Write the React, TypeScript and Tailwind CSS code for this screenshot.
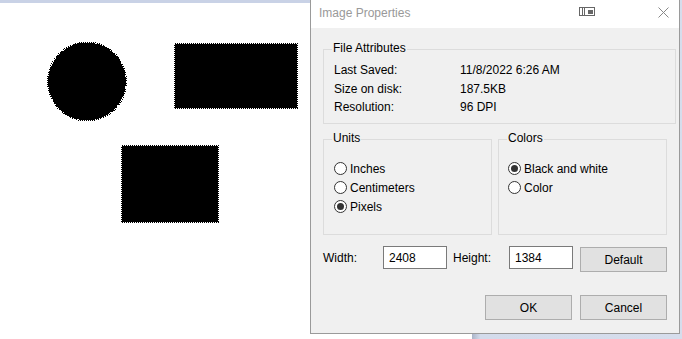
import React from 'react'

// Win10 style radio
function Radio({ label, checked = false }: { label: string; checked?: boolean }) {
  return (
    <div className="flex h-[19px] items-center gap-[3px]">
      <span className="flex h-[13px] w-[13px] items-center justify-center rounded-full border border-[#333333] bg-white">
        {checked && <span className="h-[7px] w-[7px] rounded-full bg-[#333333]" />}
      </span>
      <span>{label}</span>
    </div>
  )
}

function Group({ title, className, children }: { title: string; className: string; children: React.ReactNode }) {
  return (
    <div className={`relative border border-[#dcdcdc] ${className}`}>
      <span className="absolute -top-[9px] left-[8px] bg-[#f0f0f0] px-[1px] leading-[15px]">{title}</span>
      {children}
    </div>
  )
}

function Button({ label, className = '' }: { label: string; className?: string }) {
  return (
    <div className={`flex h-[25px] w-[87px] items-center justify-center border border-[#adadad] bg-[#e1e1e1] ${className}`}>
      {label}
    </div>
  )
}

export default function App() {
  const rows = [
    ['Last Saved:', '11/8/2022 6:26 AM'],
    ['Size on disk:', '187.5KB'],
    ['Resolution:', '96 DPI'],
  ]

  return (
    <div
      className="relative h-[339px] w-[682px] overflow-hidden bg-white text-[12px] text-black"
      style={{ fontFamily: '"Liberation Sans", Arial, sans-serif' }}
    >
      {/* paint canvas behind the dialog */}
      <div className="h-[3px] w-[310px] bg-[#c9d2e6]" />
      <div className="absolute bottom-0 left-[472px] right-0 top-0 bg-gradient-to-r from-[#aab4c8] from-0% via-[#d3dbeb] via-[4%] to-[#d6ddec]" />
      <svg className="absolute left-0 top-0" width="310" height="339" shapeRendering="crispEdges">
        <circle cx="87" cy="81.5" r="39" fill="#000" />
        <circle cx="87" cy="81.5" r="39.5" fill="none" stroke="#000" strokeWidth="1" strokeDasharray="1 1" />
        <rect x="175" y="44" width="122" height="64" fill="#000" />
        <rect x="174.5" y="43.5" width="123" height="65" fill="none" stroke="#000" strokeDasharray="1 1" />
        <rect x="122" y="146" width="96" height="76" fill="#000" />
        <rect x="121.5" y="145.5" width="97" height="77" fill="none" stroke="#000" strokeDasharray="1 1" />
      </svg>

      {/* dialog window */}
      <div className="absolute left-[310px] top-0 flex h-[334px] w-[370px] flex-col border-x border-b border-[#9a9a9a] bg-[#f0f0f0]">
        <div className="flex h-[28px] items-center bg-white pl-[8px] pr-[10px] text-[#999999]">
          <span className="-mt-[2px]">Image Properties</span>
          <svg className="ml-auto mr-[63px] -mt-[5px]" width="16" height="9" viewBox="0 0 16 9">
            <rect x="0.5" y="0.5" width="15" height="8" fill="none" stroke="#666" />
            <path d="M3.5 1v7M5.5 1v7" stroke="#666" />
            <rect x="9" y="3" width="5" height="4" fill="#666" />
          </svg>
          <svg className="-mt-[3px]" width="11" height="11" viewBox="0 0 11 11">
            <path d="M0.5 0.5l10 10M10.5 0.5l-10 10" stroke="#888" strokeWidth="1" />
          </svg>
        </div>

        <div className="flex flex-col pl-[12px]">
          <Group title="File Attributes" className="mt-[21px] h-[75px] w-[353px] pl-[10px] pt-[11px]">
            {rows.map(([k, v]) => (
              <div key={k} className="flex h-[18.5px] items-center">
                <span className="w-[126px]">{k}</span>
                <span>{v}</span>
              </div>
            ))}
          </Group>

          <div className="mt-[15px] flex gap-[6px]">
            <Group title="Units" className="h-[96px] w-[169px] pl-[10px] pt-[19px]">
              <Radio label="Inches" />
              <Radio label="Centimeters" />
              <Radio label="Pixels" checked />
            </Group>
            <Group title="Colors" className="h-[96px] w-[169px] pl-[9px] pt-[19px]">
              <Radio label="Black and white" checked />
              <Radio label="Color" />
            </Group>
          </div>

          <div className="mt-[11px] flex items-start">
            <span className="flex h-[23px] w-[60px] items-center">Width:</span>
            <div className="flex h-[23px] w-[64px] items-center border border-[#7a7a7a] bg-white pl-[5px]">2408</div>
            <span className="ml-[6px] flex h-[23px] w-[56px] items-center">Height:</span>
            <div className="flex h-[23px] w-[64px] items-center border border-[#7a7a7a] bg-white pl-[5px]">1384</div>
            <Button label="Default" className="ml-[7px] mt-[1px]" />
          </div>

          <div className="mt-[23px] flex justify-end gap-[8px] pr-[12px]">
            <Button label="OK" />
            <Button label="Cancel" />
          </div>
        </div>
      </div>
    </div>
  )
}
